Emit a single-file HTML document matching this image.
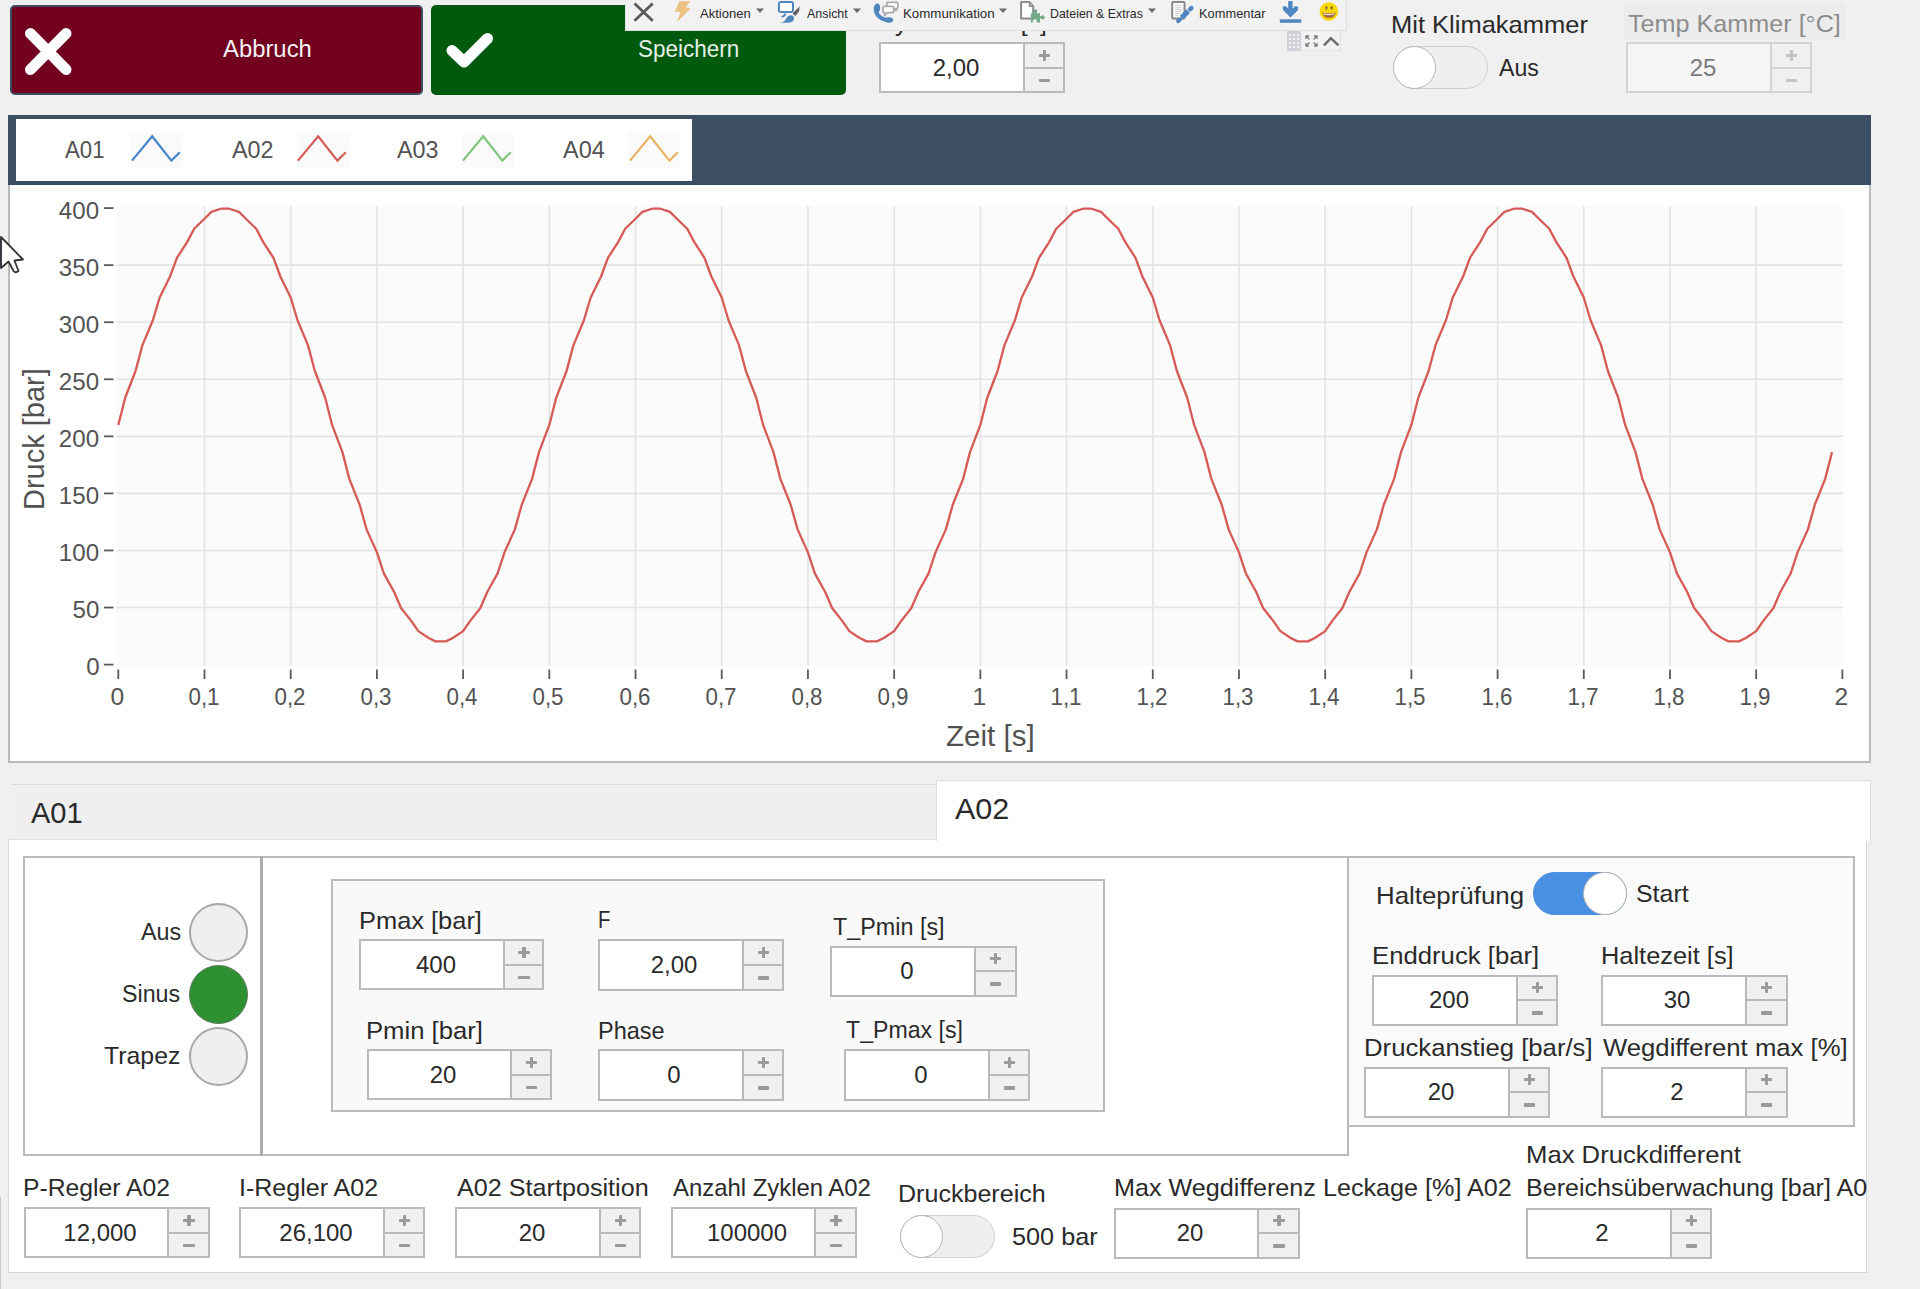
<!DOCTYPE html>
<html><head><meta charset="utf-8"><title>Editor</title>
<style>
html,body{margin:0;padding:0;}
body{width:1920px;height:1289px;overflow:hidden;position:relative;background:#f0f0f0;font-family:"Liberation Sans", sans-serif;}
</style></head><body>
<div style="position:absolute;left:10px;top:5px;width:413px;height:90px;box-sizing:border-box;background:#72001f;border:2px solid #3f4b5e;border-radius:5px;"></div>
<svg style="position:absolute;left:0;top:0" width="100" height="100"><path d="M30.5 33.5 L66 69.5 M66 33.5 L30.5 69.5" stroke="#fff" stroke-width="11" stroke-linecap="round" fill="none"/></svg>
<div style="position:absolute;left:223.10px;top:36.66px;font-size:24.6px;line-height:24.6px;height:24.6px;white-space:nowrap;color:#f2f2f2;transform-origin:left 0;transform:scaleX(0.9695);">Abbruch</div>
<div style="position:absolute;left:431px;top:5px;width:415px;height:90px;box-sizing:border-box;background:#005a0e;border-radius:5px;"></div>
<svg style="position:absolute;left:420px;top:0" width="100" height="100"><path d="M32 50.5 L44 62 L67.5 38.5" stroke="#fff" stroke-width="11" stroke-linecap="round" stroke-linejoin="round" fill="none"/></svg>
<div style="position:absolute;left:638.39px;top:36.56px;font-size:24.6px;line-height:24.6px;height:24.6px;white-space:nowrap;color:#e6efe6;transform-origin:left 0;transform:scaleX(0.9132);">Speichern</div>
<div style="position:absolute;left:880.00px;top:11.16px;font-size:24.6px;line-height:24.6px;height:24.6px;white-space:nowrap;color:#2a2a2a;transform-origin:left 0;transform:scaleX(1.0005);">Zyklusdauer [s]</div>
<div style="position:absolute;left:879px;top:42px;width:186px;height:51px;box-sizing:border-box;border:2px solid #b9babe;background:#ffffff;"></div>
<div style="position:absolute;left:1023px;top:42px;width:2px;height:51px;background:#b9babe;"></div>
<div style="position:absolute;left:1025px;top:44px;width:38px;height:47px;background:#f0f0f0;"></div>
<div style="position:absolute;left:1024px;top:66.5px;width:41px;height:2px;background:#b9babe;"></div>
<div style="position:absolute;left:1039.1px;top:53.5px;width:11.4px;height:3.4px;border-radius:0.8px;background:#9a9a9a;"></div>
<div style="position:absolute;left:1043.1px;top:49.5px;width:3.4px;height:11.4px;border-radius:0.8px;background:#9a9a9a;"></div>
<div style="position:absolute;left:1039.1px;top:78.5px;width:11.4px;height:3.6px;border-radius:0.8px;background:#9a9a9a;"></div>
<div style="position:absolute;left:455.79999999999995px;width:1000px;text-align:center;top:55.56px;font-size:24.6px;line-height:24.6px;height:24.6px;white-space:nowrap;color:#2a2a2a;transform-origin:center 0;transform:scaleX(0.975);">2,00</div>
<div style="position:absolute;left:625px;top:0px;width:722px;height:31px;box-sizing:border-box;background:#f2f2f2;border-bottom:1px solid #dedede;border-left:1px solid #e6e6e6;border-right:1px solid #e0e0e0;"></div>
<svg style="position:absolute;left:625px;top:0" width="40" height="31"><path d="M9.5 3.6 L27.7 20.8 M27.7 3.6 L9.5 20.8" stroke="#5a5a5a" stroke-width="2.8" fill="none"/></svg>
<svg style="position:absolute;left:665px;top:0" width="30" height="31"><path d="M14.4 1.3 L25.4 1.3 L20.5 7.2 L25.6 8.4 L11.9 22.3 L15.4 12.1 L9.8 11.6 Z" fill="#ecc282"/></svg>
<div style="position:absolute;left:700.10px;top:6.64px;font-size:13px;line-height:13px;height:13px;white-space:nowrap;color:#2a2a2a;transform-origin:left 0;transform:scaleX(1.0028);">Aktionen</div>
<svg style="position:absolute;left:756px;top:8px" width="10" height="6"><path d="M0 0.5 L8 0.5 L4 5 Z" fill="#6a6a6a"/></svg>
<svg style="position:absolute;left:772px;top:0" width="34" height="31"><rect x="6.9" y="2.1" width="14.1" height="10" rx="2" fill="#fff" stroke="#4f86c0" stroke-width="2"/><path d="M13.5 13.5 Q13 16.5 9.5 16.8" stroke="#4f86c0" stroke-width="1.6" fill="none"/><path d="M8 22.6 Q13 22 14.5 18 Q16 15 19 15.2 Q22.5 15.8 22 19 Q21 22.8 15 22.8 Z" fill="#4f86c0"/><path d="M20.5 13.5 L27.6 6.5 L27.2 11 L23.5 16 Z" fill="#5f5d5d"/></svg>
<div style="position:absolute;left:806.90px;top:6.64px;font-size:13px;line-height:13px;height:13px;white-space:nowrap;color:#2a2a2a;transform-origin:left 0;transform:scaleX(0.9554);">Ansicht</div>
<svg style="position:absolute;left:853px;top:8px" width="10" height="6"><path d="M0 0.5 L8 0.5 L4 5 Z" fill="#6a6a6a"/></svg>
<svg style="position:absolute;left:868px;top:0" width="34" height="31"><path d="M19.8 2.3 L28.8 2.3 Q29.8 2.3 29.8 3.3 L29.8 7.5 Q29.8 8.5 28.8 8.5 L27.5 8.5 L28.5 10.5 L25 8.5 L19.8 8.5 Q18.8 8.5 18.8 7.5 L18.8 3.3 Q18.8 2.3 19.8 2.3 Z" fill="#fff" stroke="#a8a8aa" stroke-width="1.7" stroke-linejoin="round"/><path d="M16 6.4 L24.7 6.4 Q25.7 6.4 25.7 7.4 L25.7 11.6 Q25.7 12.6 24.7 12.6 L19.5 12.6 L16.5 15.7 L16.5 12.6 L16 12.6 Q15 12.6 15 11.6 L15 7.4 Q15 6.4 16 6.4 Z" fill="#fff" stroke="#a8a8aa" stroke-width="1.7" stroke-linejoin="round"/><path d="M9 5.8 Q7.5 6.5 7.8 10 Q8.5 15.5 14 18.5 Q17.5 20.3 21.5 20.2" stroke="#4f86c0" stroke-width="4.2" stroke-linecap="round" fill="none"/><ellipse cx="9.3" cy="8" rx="2.8" ry="4.2" fill="#4f86c0"/><ellipse cx="21" cy="20" rx="4.2" ry="2.8" fill="#4f86c0"/></svg>
<div style="position:absolute;left:902.98px;top:6.64px;font-size:13px;line-height:13px;height:13px;white-space:nowrap;color:#2a2a2a;transform-origin:left 0;transform:scaleX(1.0230);">Kommunikation</div>
<svg style="position:absolute;left:998.5px;top:8px" width="10" height="6"><path d="M0 0.5 L8 0.5 L4 5 Z" fill="#6a6a6a"/></svg>
<svg style="position:absolute;left:1014px;top:0" width="34" height="31"><path d="M7.1 2.1 L15.5 2.1 L19.2 6.2 L19.2 18.6 L7.1 18.6 Z" fill="#fff" stroke="#8c8a8a" stroke-width="2" stroke-linejoin="round"/><path d="M15.5 2.1 L15.5 6.2 L19.2 6.2" fill="#b8b8b8" stroke="#8c8a8a" stroke-width="1.5"/><path d="M16.8 13.2 L20.3 13.2 L20.3 12.5 A1.8 1.8 0 1 1 22.5 12.5 L22.5 13.2 L26 13.2 L26 16.2 L27.3 16.2 A1.9 1.9 0 1 1 27.3 18.6 L26 18.6 L26 22.6 L22.6 22.6 L22.6 19.6 L18.9 19.6 L18.9 22.6 L16.8 22.6 Z" fill="#72aa88"/></svg>
<div style="position:absolute;left:1049.65px;top:6.64px;font-size:13px;line-height:13px;height:13px;white-space:nowrap;color:#2a2a2a;transform-origin:left 0;transform:scaleX(0.9521);">Dateien &amp; Extras</div>
<svg style="position:absolute;left:1147.5px;top:8px" width="10" height="6"><path d="M0 0.5 L8 0.5 L4 5 Z" fill="#6a6a6a"/></svg>
<svg style="position:absolute;left:1164px;top:0" width="34" height="31"><rect x="8.2" y="2.1" width="12.3" height="16.5" rx="1" fill="#fff" stroke="#8a8888" stroke-width="2"/><path d="M11.1 5.2 L17.8 5.2 M11.1 7.3 L17.8 7.3 M11.1 9.4 L17.8 9.4 M11.1 11.5 L17.8 11.5 M11.1 13.6 L16.2 13.6 M11.1 15.6 L14.2 15.6" stroke="#d2d2d6" stroke-width="1.1"/><path d="M14.2 21 L15.8 19.4" stroke="#4f86c0" stroke-width="4.2" stroke-linecap="round"/><path d="M17.6 17.6 L24.2 11.2" stroke="#4f86c0" stroke-width="5.2" stroke-linecap="butt"/><path d="M26.2 9.2 L27.4 8.1" stroke="#4f86c0" stroke-width="4.4" stroke-linecap="round"/></svg>
<div style="position:absolute;left:1198.61px;top:6.64px;font-size:13px;line-height:13px;height:13px;white-space:nowrap;color:#2a2a2a;transform-origin:left 0;transform:scaleX(0.9886);">Kommentar</div>
<svg style="position:absolute;left:1274px;top:0" width="34" height="31"><rect x="14.2" y="1.1" width="4.4" height="11" fill="#4f86c0"/><path d="M8.7 6.4 L12 6.2 L16.4 10.8 L20.8 6.2 L24.1 6.4 L24 10 L16.5 17.6 L9 10 Z" fill="#4f86c0"/><rect x="5.8" y="19.3" width="21.5" height="3.5" fill="#4f86c0"/></svg>
<svg style="position:absolute;left:1318px;top:0" width="24" height="31"><circle cx="10.9" cy="11.5" r="9.3" fill="#f8d800"/><ellipse cx="8.5" cy="7.8" rx="1" ry="1.9" fill="#7a5a28"/><ellipse cx="13.6" cy="7.8" rx="1" ry="1.9" fill="#7a5a28"/><path d="M4.2 12.4 Q10.9 13.4 17.8 12.4 Q16.5 18 10.9 18 Q5.4 18 4.2 12.4 Z" fill="#a86a38"/><path d="M5.3 13.2 Q10.9 14.2 16.7 13.2 L16.2 14.8 Q10.9 15.6 5.8 14.8 Z" fill="#e8e0d8"/></svg>
<div style="position:absolute;left:1287px;top:31px;width:54px;height:20px;box-sizing:border-box;background:#f2f2f2;border:1px solid #e2e2e2;border-top:none;"></div>
<div style="position:absolute;left:1287px;top:31px;width:14px;height:20px;background:#cfd3d9;"></div>
<svg style="position:absolute;left:1287px;top:31px" width="54" height="20"><g fill="#f4f4f4"><rect x="2" y="3" width="2" height="2"/><rect x="6" y="3" width="2" height="2"/><rect x="10" y="3" width="2" height="2"/><rect x="2" y="7" width="2" height="2"/><rect x="6" y="7" width="2" height="2"/><rect x="10" y="7" width="2" height="2"/><rect x="2" y="11" width="2" height="2"/><rect x="6" y="11" width="2" height="2"/><rect x="10" y="11" width="2" height="2"/><rect x="2" y="15" width="2" height="2"/><rect x="6" y="15" width="2" height="2"/><rect x="10" y="15" width="2" height="2"/></g><path d="M19 8 L19 5 L22 5 M19 5 L22.5 8.5 M30 8 L30 5 L27 5 M30 5 L26.5 8.5 M19 12 L19 15 L22 15 M19 15 L22.5 11.5 M30 12 L30 15 L27 15 M30 15 L26.5 11.5" stroke="#7a7a7a" stroke-width="1.3" fill="none"/><path d="M37 14.3 L43.8 7.2 L51.5 14.3" stroke="#6a6a6a" stroke-width="2.4" fill="none"/></svg>
<div style="position:absolute;left:1391.13px;top:13.26px;font-size:24.6px;line-height:24.6px;height:24.6px;white-space:nowrap;color:#2a2a2a;transform-origin:left 0;transform:scaleX(1.0371);">Mit Klimakammer</div>
<div style="position:absolute;left:1393px;top:46px;width:95px;height:43px;box-sizing:border-box;border-radius:21.5px;background:#efefef;border:1.5px solid #cfcfcf;"></div>
<div style="position:absolute;left:1393px;top:46px;width:43px;height:43px;box-sizing:border-box;border-radius:50%;background:#fff;border:1.5px solid #b4b4b4;"></div>
<div style="position:absolute;left:1499.10px;top:55.66px;font-size:24.6px;line-height:24.6px;height:24.6px;white-space:nowrap;color:#2a2a2a;transform-origin:left 0;transform:scaleX(0.9387);">Aus</div>
<div style="position:absolute;left:1624px;top:3px;width:222px;height:37px;background:#ececec;"></div>
<div style="position:absolute;left:1628.00px;top:12.06px;font-size:24.6px;line-height:24.6px;height:24.6px;white-space:nowrap;color:#8c8c8c;transform-origin:left 0;transform:scaleX(1.0234);">Temp Kammer [°C]</div>
<div style="position:absolute;left:1626px;top:42px;width:186px;height:51px;box-sizing:border-box;border:2px solid #d2d3d6;background:#f5f5f5;"></div>
<div style="position:absolute;left:1770px;top:42px;width:2px;height:51px;background:#d2d3d6;"></div>
<div style="position:absolute;left:1772px;top:44px;width:38px;height:47px;background:#f0f0f0;"></div>
<div style="position:absolute;left:1771px;top:66.5px;width:41px;height:2px;background:#d2d3d6;"></div>
<div style="position:absolute;left:1786.1px;top:53.5px;width:11.4px;height:3.4px;border-radius:0.8px;background:#c4c4c4;"></div>
<div style="position:absolute;left:1790.1px;top:49.5px;width:3.4px;height:11.4px;border-radius:0.8px;background:#c4c4c4;"></div>
<div style="position:absolute;left:1786.1px;top:78.5px;width:11.4px;height:3.6px;border-radius:0.8px;background:#c4c4c4;"></div>
<div style="position:absolute;left:1202.8px;width:1000px;text-align:center;top:55.56px;font-size:24.6px;line-height:24.6px;height:24.6px;white-space:nowrap;color:#7a7a7a;transform-origin:center 0;transform:scaleX(0.975);">25</div>
<div style="position:absolute;left:8px;top:115px;width:1863px;height:648px;box-sizing:border-box;background:#fff;border:2px solid #b9babe;"></div>
<div style="position:absolute;left:8px;top:115px;width:1863px;height:70px;background:#3c4e63;"></div>
<div style="position:absolute;left:16px;top:119px;width:676px;height:62px;background:#fff;"></div>
<div style="position:absolute;left:65.10px;top:138.43px;font-size:24.4px;line-height:24.4px;height:24.4px;white-space:nowrap;color:#525252;transform-origin:left 0;transform:scaleX(0.9128);">A01</div>
<div style="position:absolute;left:130.5px;top:132.5px;width:52px;height:36px;background:#fafafa;"></div>
<svg style="position:absolute;left:130px;top:130px" width="56" height="40"><path d="M2 30.6 L22.2 6.2 L41.4 30.6 L49.8 22.2" stroke="#4584c8" stroke-width="2.2" fill="none"/></svg>
<div style="position:absolute;left:231.70px;top:138.43px;font-size:24.4px;line-height:24.4px;height:24.4px;white-space:nowrap;color:#525252;transform-origin:left 0;transform:scaleX(0.9572);">A02</div>
<div style="position:absolute;left:296.8px;top:132.5px;width:52px;height:36px;background:#fafafa;"></div>
<svg style="position:absolute;left:296.3px;top:130px" width="56" height="40"><path d="M2 30.6 L22.2 6.2 L41.4 30.6 L49.8 22.2" stroke="#d65a55" stroke-width="2.2" fill="none"/></svg>
<div style="position:absolute;left:396.70px;top:138.43px;font-size:24.4px;line-height:24.4px;height:24.4px;white-space:nowrap;color:#525252;transform-origin:left 0;transform:scaleX(0.9572);">A03</div>
<div style="position:absolute;left:461.8px;top:132.5px;width:52px;height:36px;background:#fafafa;"></div>
<svg style="position:absolute;left:461.3px;top:130px" width="56" height="40"><path d="M2 30.6 L22.2 6.2 L41.4 30.6 L49.8 22.2" stroke="#80c47a" stroke-width="2.2" fill="none"/></svg>
<div style="position:absolute;left:562.50px;top:138.43px;font-size:24.4px;line-height:24.4px;height:24.4px;white-space:nowrap;color:#525252;transform-origin:left 0;transform:scaleX(0.9619);">A04</div>
<div style="position:absolute;left:628.0px;top:132.5px;width:52px;height:36px;background:#fafafa;"></div>
<svg style="position:absolute;left:627.5px;top:130px" width="56" height="40"><path d="M2 30.6 L22.2 6.2 L41.4 30.6 L49.8 22.2" stroke="#e9b264" stroke-width="2.2" fill="none"/></svg>
<svg style="position:absolute;left:0;top:0" width="1920" height="780">
<rect x="116.5" y="206" width="1726.5" height="460" fill="#fbfbfb"/>
<line x1="204.50" y1="206" x2="204.50" y2="666" stroke="#e4e4e4" stroke-width="1.6"/>
<line x1="290.71" y1="206" x2="290.71" y2="666" stroke="#e4e4e4" stroke-width="1.6"/>
<line x1="376.91" y1="206" x2="376.91" y2="666" stroke="#e4e4e4" stroke-width="1.6"/>
<line x1="463.12" y1="206" x2="463.12" y2="666" stroke="#e4e4e4" stroke-width="1.6"/>
<line x1="549.32" y1="206" x2="549.32" y2="666" stroke="#e4e4e4" stroke-width="1.6"/>
<line x1="635.53" y1="206" x2="635.53" y2="666" stroke="#e4e4e4" stroke-width="1.6"/>
<line x1="721.73" y1="206" x2="721.73" y2="666" stroke="#e4e4e4" stroke-width="1.6"/>
<line x1="807.94" y1="206" x2="807.94" y2="666" stroke="#e4e4e4" stroke-width="1.6"/>
<line x1="894.14" y1="206" x2="894.14" y2="666" stroke="#e4e4e4" stroke-width="1.6"/>
<line x1="980.35" y1="206" x2="980.35" y2="666" stroke="#e4e4e4" stroke-width="1.6"/>
<line x1="1066.55" y1="206" x2="1066.55" y2="666" stroke="#e4e4e4" stroke-width="1.6"/>
<line x1="1152.76" y1="206" x2="1152.76" y2="666" stroke="#e4e4e4" stroke-width="1.6"/>
<line x1="1238.96" y1="206" x2="1238.96" y2="666" stroke="#e4e4e4" stroke-width="1.6"/>
<line x1="1325.17" y1="206" x2="1325.17" y2="666" stroke="#e4e4e4" stroke-width="1.6"/>
<line x1="1411.38" y1="206" x2="1411.38" y2="666" stroke="#e4e4e4" stroke-width="1.6"/>
<line x1="1497.58" y1="206" x2="1497.58" y2="666" stroke="#e4e4e4" stroke-width="1.6"/>
<line x1="1583.78" y1="206" x2="1583.78" y2="666" stroke="#e4e4e4" stroke-width="1.6"/>
<line x1="1669.99" y1="206" x2="1669.99" y2="666" stroke="#e4e4e4" stroke-width="1.6"/>
<line x1="1756.19" y1="206" x2="1756.19" y2="666" stroke="#e4e4e4" stroke-width="1.6"/>
<line x1="116.5" y1="607.54" x2="1843" y2="607.54" stroke="#e4e4e4" stroke-width="1.6"/>
<line x1="116.5" y1="550.48" x2="1843" y2="550.48" stroke="#e4e4e4" stroke-width="1.6"/>
<line x1="116.5" y1="493.41" x2="1843" y2="493.41" stroke="#e4e4e4" stroke-width="1.6"/>
<line x1="116.5" y1="436.35" x2="1843" y2="436.35" stroke="#e4e4e4" stroke-width="1.6"/>
<line x1="116.5" y1="379.29" x2="1843" y2="379.29" stroke="#e4e4e4" stroke-width="1.6"/>
<line x1="116.5" y1="322.22" x2="1843" y2="322.22" stroke="#e4e4e4" stroke-width="1.6"/>
<line x1="116.5" y1="265.16" x2="1843" y2="265.16" stroke="#e4e4e4" stroke-width="1.6"/>
<line x1="104" y1="664.60" x2="113.5" y2="664.60" stroke="#5a5a5a" stroke-width="1.8"/>
<line x1="104" y1="607.54" x2="113.5" y2="607.54" stroke="#5a5a5a" stroke-width="1.8"/>
<line x1="104" y1="550.48" x2="113.5" y2="550.48" stroke="#5a5a5a" stroke-width="1.8"/>
<line x1="104" y1="493.41" x2="113.5" y2="493.41" stroke="#5a5a5a" stroke-width="1.8"/>
<line x1="104" y1="436.35" x2="113.5" y2="436.35" stroke="#5a5a5a" stroke-width="1.8"/>
<line x1="104" y1="379.29" x2="113.5" y2="379.29" stroke="#5a5a5a" stroke-width="1.8"/>
<line x1="104" y1="322.22" x2="113.5" y2="322.22" stroke="#5a5a5a" stroke-width="1.8"/>
<line x1="104" y1="265.16" x2="113.5" y2="265.16" stroke="#5a5a5a" stroke-width="1.8"/>
<line x1="104" y1="208.10" x2="113.5" y2="208.10" stroke="#5a5a5a" stroke-width="1.8"/>
<line x1="118.30" y1="669.5" x2="118.30" y2="679" stroke="#5a5a5a" stroke-width="1.8"/>
<line x1="204.50" y1="669.5" x2="204.50" y2="679" stroke="#5a5a5a" stroke-width="1.8"/>
<line x1="290.71" y1="669.5" x2="290.71" y2="679" stroke="#5a5a5a" stroke-width="1.8"/>
<line x1="376.91" y1="669.5" x2="376.91" y2="679" stroke="#5a5a5a" stroke-width="1.8"/>
<line x1="463.12" y1="669.5" x2="463.12" y2="679" stroke="#5a5a5a" stroke-width="1.8"/>
<line x1="549.32" y1="669.5" x2="549.32" y2="679" stroke="#5a5a5a" stroke-width="1.8"/>
<line x1="635.53" y1="669.5" x2="635.53" y2="679" stroke="#5a5a5a" stroke-width="1.8"/>
<line x1="721.73" y1="669.5" x2="721.73" y2="679" stroke="#5a5a5a" stroke-width="1.8"/>
<line x1="807.94" y1="669.5" x2="807.94" y2="679" stroke="#5a5a5a" stroke-width="1.8"/>
<line x1="894.14" y1="669.5" x2="894.14" y2="679" stroke="#5a5a5a" stroke-width="1.8"/>
<line x1="980.35" y1="669.5" x2="980.35" y2="679" stroke="#5a5a5a" stroke-width="1.8"/>
<line x1="1066.55" y1="669.5" x2="1066.55" y2="679" stroke="#5a5a5a" stroke-width="1.8"/>
<line x1="1152.76" y1="669.5" x2="1152.76" y2="679" stroke="#5a5a5a" stroke-width="1.8"/>
<line x1="1238.96" y1="669.5" x2="1238.96" y2="679" stroke="#5a5a5a" stroke-width="1.8"/>
<line x1="1325.17" y1="669.5" x2="1325.17" y2="679" stroke="#5a5a5a" stroke-width="1.8"/>
<line x1="1411.38" y1="669.5" x2="1411.38" y2="679" stroke="#5a5a5a" stroke-width="1.8"/>
<line x1="1497.58" y1="669.5" x2="1497.58" y2="679" stroke="#5a5a5a" stroke-width="1.8"/>
<line x1="1583.78" y1="669.5" x2="1583.78" y2="679" stroke="#5a5a5a" stroke-width="1.8"/>
<line x1="1669.99" y1="669.5" x2="1669.99" y2="679" stroke="#5a5a5a" stroke-width="1.8"/>
<line x1="1756.19" y1="669.5" x2="1756.19" y2="679" stroke="#5a5a5a" stroke-width="1.8"/>
<line x1="1842.40" y1="669.5" x2="1842.40" y2="679" stroke="#5a5a5a" stroke-width="1.8"/>
<polyline points="118.30,424.94 125.20,397.76 135.54,371.01 142.44,345.11 152.78,320.48 159.68,297.48 170.02,276.50 176.92,257.86 187.26,241.86 194.16,228.74 204.50,218.71 211.40,211.94 221.75,208.53 228.64,208.53 238.99,211.94 245.88,218.71 256.23,228.74 263.12,241.86 273.47,257.86 280.37,276.50 290.71,297.48 297.61,320.48 307.95,345.11 314.85,371.01 325.19,397.76 332.09,424.94 342.43,452.11 349.33,478.86 359.67,504.76 366.57,529.40 376.91,552.39 383.81,573.37 394.16,592.01 401.05,608.02 411.40,621.14 418.29,631.16 428.64,637.93 435.53,641.35 445.88,641.35 452.78,637.93 463.12,631.16 470.02,621.14 480.36,608.02 487.26,592.01 497.60,573.37 504.50,552.39 514.84,529.40 521.74,504.76 532.08,478.86 538.98,452.11 549.32,424.94 556.22,397.76 566.57,371.01 573.46,345.11 583.81,320.48 590.70,297.48 601.05,276.50 607.94,257.86 618.29,241.86 625.19,228.74 635.53,218.71 642.43,211.94 652.77,208.53 659.67,208.53 670.01,211.94 676.91,218.71 687.25,228.74 694.15,241.86 704.49,257.86 711.39,276.50 721.73,297.48 728.63,320.48 738.98,345.11 745.87,371.01 756.22,397.76 763.11,424.94 773.46,452.11 780.35,478.86 790.70,504.76 797.60,529.40 807.94,552.39 814.84,573.37 825.18,592.01 832.08,608.02 842.42,621.14 849.32,631.16 859.66,637.93 866.56,641.35 876.90,641.35 883.80,637.93 894.14,631.16 901.04,621.14 911.39,608.02 918.28,592.01 928.63,573.37 935.52,552.39 945.87,529.40 952.76,504.76 963.11,478.86 970.01,452.11 980.35,424.94 987.25,397.76 997.59,371.01 1004.49,345.11 1014.83,320.48 1021.73,297.48 1032.07,276.50 1038.97,257.86 1049.31,241.86 1056.21,228.74 1066.56,218.71 1073.45,211.94 1083.80,208.53 1090.69,208.53 1101.04,211.94 1107.93,218.71 1118.28,228.74 1125.17,241.86 1135.52,257.86 1142.42,276.50 1152.76,297.48 1159.66,320.48 1170.00,345.11 1176.90,371.01 1187.24,397.76 1194.14,424.94 1204.48,452.11 1211.38,478.86 1221.72,504.76 1228.62,529.40 1238.96,552.39 1245.86,573.37 1256.21,592.01 1263.10,608.02 1273.45,621.14 1280.34,631.16 1290.69,637.93 1297.58,641.35 1307.93,641.35 1314.83,637.93 1325.17,631.16 1332.07,621.14 1342.41,608.02 1349.31,592.01 1359.65,573.37 1366.55,552.39 1376.89,529.40 1383.79,504.76 1394.13,478.86 1401.03,452.11 1411.37,424.94 1418.27,397.76 1428.62,371.01 1435.51,345.11 1445.86,320.48 1452.75,297.48 1463.10,276.50 1469.99,257.86 1480.34,241.86 1487.24,228.74 1497.58,218.71 1504.48,211.94 1514.82,208.53 1521.72,208.53 1532.06,211.94 1538.96,218.71 1549.30,228.74 1556.20,241.86 1566.54,257.86 1573.44,276.50 1583.78,297.48 1590.68,320.48 1601.03,345.11 1607.92,371.01 1618.27,397.76 1625.16,424.94 1635.51,452.11 1642.40,478.86 1652.75,504.76 1659.65,529.40 1669.99,552.39 1676.89,573.37 1687.23,592.01 1694.13,608.02 1704.47,621.14 1711.37,631.16 1721.71,637.93 1728.61,641.35 1738.95,641.35 1745.85,637.93 1756.19,631.16 1763.09,621.14 1773.44,608.02 1780.33,592.01 1790.68,573.37 1797.57,552.39 1807.92,529.40 1814.81,504.76 1825.16,478.86 1832.06,452.11" fill="none" stroke="#d65a55" stroke-width="2.3" stroke-linejoin="round"/>
</svg>
<div style="position:absolute;right:1820.5px;top:655.26px;font-size:24.6px;line-height:24.6px;height:24.6px;white-space:nowrap;color:#535353;transform-origin:right 0;transform:scaleX(0.98);">0</div>
<div style="position:absolute;right:1820.5px;top:598.20px;font-size:24.6px;line-height:24.6px;height:24.6px;white-space:nowrap;color:#535353;transform-origin:right 0;transform:scaleX(0.98);">50</div>
<div style="position:absolute;right:1820.5px;top:541.13px;font-size:24.6px;line-height:24.6px;height:24.6px;white-space:nowrap;color:#535353;transform-origin:right 0;transform:scaleX(0.98);">100</div>
<div style="position:absolute;right:1820.5px;top:484.07px;font-size:24.6px;line-height:24.6px;height:24.6px;white-space:nowrap;color:#535353;transform-origin:right 0;transform:scaleX(0.98);">150</div>
<div style="position:absolute;right:1820.5px;top:427.01px;font-size:24.6px;line-height:24.6px;height:24.6px;white-space:nowrap;color:#535353;transform-origin:right 0;transform:scaleX(0.98);">200</div>
<div style="position:absolute;right:1820.5px;top:369.95px;font-size:24.6px;line-height:24.6px;height:24.6px;white-space:nowrap;color:#535353;transform-origin:right 0;transform:scaleX(0.98);">250</div>
<div style="position:absolute;right:1820.5px;top:312.88px;font-size:24.6px;line-height:24.6px;height:24.6px;white-space:nowrap;color:#535353;transform-origin:right 0;transform:scaleX(0.98);">300</div>
<div style="position:absolute;right:1820.5px;top:255.82px;font-size:24.6px;line-height:24.6px;height:24.6px;white-space:nowrap;color:#535353;transform-origin:right 0;transform:scaleX(0.98);">350</div>
<div style="position:absolute;right:1820.5px;top:198.76px;font-size:24.6px;line-height:24.6px;height:24.6px;white-space:nowrap;color:#535353;transform-origin:right 0;transform:scaleX(0.98);">400</div>
<div style="position:absolute;left:-382.7px;width:1000px;text-align:center;top:685.46px;font-size:24.6px;line-height:24.6px;height:24.6px;white-space:nowrap;color:#535353;transform-origin:center 0;">0</div>
<div style="position:absolute;left:-296.495px;width:1000px;text-align:center;top:685.46px;font-size:24.6px;line-height:24.6px;height:24.6px;white-space:nowrap;color:#535353;transform-origin:center 0;transform:scaleX(0.91);">0,1</div>
<div style="position:absolute;left:-210.29000000000002px;width:1000px;text-align:center;top:685.46px;font-size:24.6px;line-height:24.6px;height:24.6px;white-space:nowrap;color:#535353;transform-origin:center 0;transform:scaleX(0.91);">0,2</div>
<div style="position:absolute;left:-124.08500000000004px;width:1000px;text-align:center;top:685.46px;font-size:24.6px;line-height:24.6px;height:24.6px;white-space:nowrap;color:#535353;transform-origin:center 0;transform:scaleX(0.91);">0,3</div>
<div style="position:absolute;left:-37.879999999999995px;width:1000px;text-align:center;top:685.46px;font-size:24.6px;line-height:24.6px;height:24.6px;white-space:nowrap;color:#535353;transform-origin:center 0;transform:scaleX(0.91);">0,4</div>
<div style="position:absolute;left:48.32499999999993px;width:1000px;text-align:center;top:685.46px;font-size:24.6px;line-height:24.6px;height:24.6px;white-space:nowrap;color:#535353;transform-origin:center 0;transform:scaleX(0.91);">0,5</div>
<div style="position:absolute;left:134.52999999999986px;width:1000px;text-align:center;top:685.46px;font-size:24.6px;line-height:24.6px;height:24.6px;white-space:nowrap;color:#535353;transform-origin:center 0;transform:scaleX(0.91);">0,6</div>
<div style="position:absolute;left:220.7349999999999px;width:1000px;text-align:center;top:685.46px;font-size:24.6px;line-height:24.6px;height:24.6px;white-space:nowrap;color:#535353;transform-origin:center 0;transform:scaleX(0.91);">0,7</div>
<div style="position:absolute;left:306.93999999999994px;width:1000px;text-align:center;top:685.46px;font-size:24.6px;line-height:24.6px;height:24.6px;white-space:nowrap;color:#535353;transform-origin:center 0;transform:scaleX(0.91);">0,8</div>
<div style="position:absolute;left:393.145px;width:1000px;text-align:center;top:685.46px;font-size:24.6px;line-height:24.6px;height:24.6px;white-space:nowrap;color:#535353;transform-origin:center 0;transform:scaleX(0.91);">0,9</div>
<div style="position:absolute;left:479.3499999999999px;width:1000px;text-align:center;top:685.46px;font-size:24.6px;line-height:24.6px;height:24.6px;white-space:nowrap;color:#535353;transform-origin:center 0;">1</div>
<div style="position:absolute;left:565.5549999999998px;width:1000px;text-align:center;top:685.46px;font-size:24.6px;line-height:24.6px;height:24.6px;white-space:nowrap;color:#535353;transform-origin:center 0;transform:scaleX(0.91);">1,1</div>
<div style="position:absolute;left:651.7599999999998px;width:1000px;text-align:center;top:685.46px;font-size:24.6px;line-height:24.6px;height:24.6px;white-space:nowrap;color:#535353;transform-origin:center 0;transform:scaleX(0.91);">1,2</div>
<div style="position:absolute;left:737.9649999999999px;width:1000px;text-align:center;top:685.46px;font-size:24.6px;line-height:24.6px;height:24.6px;white-space:nowrap;color:#535353;transform-origin:center 0;transform:scaleX(0.91);">1,3</div>
<div style="position:absolute;left:824.1699999999998px;width:1000px;text-align:center;top:685.46px;font-size:24.6px;line-height:24.6px;height:24.6px;white-space:nowrap;color:#535353;transform-origin:center 0;transform:scaleX(0.91);">1,4</div>
<div style="position:absolute;left:910.375px;width:1000px;text-align:center;top:685.46px;font-size:24.6px;line-height:24.6px;height:24.6px;white-space:nowrap;color:#535353;transform-origin:center 0;transform:scaleX(0.91);">1,5</div>
<div style="position:absolute;left:996.5799999999999px;width:1000px;text-align:center;top:685.46px;font-size:24.6px;line-height:24.6px;height:24.6px;white-space:nowrap;color:#535353;transform-origin:center 0;transform:scaleX(0.91);">1,6</div>
<div style="position:absolute;left:1082.7849999999999px;width:1000px;text-align:center;top:685.46px;font-size:24.6px;line-height:24.6px;height:24.6px;white-space:nowrap;color:#535353;transform-origin:center 0;transform:scaleX(0.91);">1,7</div>
<div style="position:absolute;left:1168.99px;width:1000px;text-align:center;top:685.46px;font-size:24.6px;line-height:24.6px;height:24.6px;white-space:nowrap;color:#535353;transform-origin:center 0;transform:scaleX(0.91);">1,8</div>
<div style="position:absolute;left:1255.195px;width:1000px;text-align:center;top:685.46px;font-size:24.6px;line-height:24.6px;height:24.6px;white-space:nowrap;color:#535353;transform-origin:center 0;transform:scaleX(0.91);">1,9</div>
<div style="position:absolute;left:1341.3999999999999px;width:1000px;text-align:center;top:685.46px;font-size:24.6px;line-height:24.6px;height:24.6px;white-space:nowrap;color:#535353;transform-origin:center 0;">2</div>
<div style="position:absolute;left:44.1px;top:507.5px;width:0;height:0;transform:rotate(-90deg);transform-origin:0 0;"><div style="position:absolute;left:-2px;top:-24.21px;font-size:29px;line-height:29px;color:#525252;white-space:nowrap;">Druck [bar]</div></div>
<div style="position:absolute;left:945.90px;top:721.68px;font-size:29px;line-height:29px;height:29px;white-space:nowrap;color:#525252;transform-origin:left 0;transform:scaleX(1.0182);">Zeit [s]</div>
<div style="position:absolute;left:11px;top:784px;width:926px;height:55px;background:#efefef;border-top:1px solid #dadada;"></div>
<div style="position:absolute;left:31.00px;top:798.45px;font-size:30px;line-height:30px;height:30px;white-space:nowrap;color:#2a2a2a;transform-origin:left 0;transform:scaleX(0.9678);">A01</div>
<div style="position:absolute;left:8px;top:839px;width:1859px;height:434px;box-sizing:border-box;background:#fff;border:1px solid #d6d6d8;border-top:1px solid #e0e0e0;"></div>
<div style="position:absolute;left:936px;top:780px;width:935px;height:61px;box-sizing:border-box;background:#fff;border:1px solid #dcdcdc;border-bottom:none;"></div>
<div style="position:absolute;left:955.00px;top:794.35px;font-size:30px;line-height:30px;height:30px;white-space:nowrap;color:#2a2a2a;transform-origin:left 0;transform:scaleX(1.0172);">A02</div>
<div style="position:absolute;left:23px;top:856px;width:1326px;height:300px;box-sizing:border-box;border:2px solid #b9babe;"></div>
<div style="position:absolute;left:260px;top:856px;width:3px;height:300px;background:#a9abb0;"></div>
<div style="position:absolute;left:140.50px;top:920.46px;font-size:24.6px;line-height:24.6px;height:24.6px;white-space:nowrap;color:#2a2a2a;transform-origin:left 0;transform:scaleX(0.9458);">Aus</div>
<div style="position:absolute;left:189.3px;top:902.7px;width:59px;height:59px;box-sizing:border-box;border-radius:50%;background:#efefef;border:2px solid #a8a8a8;"></div>
<div style="position:absolute;left:122.46px;top:981.76px;font-size:24.6px;line-height:24.6px;height:24.6px;white-space:nowrap;color:#2a2a2a;transform-origin:left 0;transform:scaleX(0.9448);">Sinus</div>
<div style="position:absolute;left:189.3px;top:964.8px;width:59px;height:59px;box-sizing:border-box;border-radius:50%;background:#2e9030;border:1.5px solid #5b7a5b;"></div>
<div style="position:absolute;left:104.20px;top:1043.76px;font-size:24.6px;line-height:24.6px;height:24.6px;white-space:nowrap;color:#2a2a2a;transform-origin:left 0;transform:scaleX(1.0102);">Trapez</div>
<div style="position:absolute;left:189.3px;top:1026.8px;width:59px;height:59px;box-sizing:border-box;border-radius:50%;background:#efefef;border:2px solid #a8a8a8;"></div>
<div style="position:absolute;left:331px;top:879px;width:774px;height:233px;box-sizing:border-box;background:#f9f9f9;border:2px solid #b9babe;"></div>
<div style="position:absolute;left:358.93px;top:909.46px;font-size:24.6px;line-height:24.6px;height:24.6px;white-space:nowrap;color:#2a2a2a;transform-origin:left 0;transform:scaleX(1.0338);">Pmax [bar]</div>
<div style="position:absolute;left:359px;top:939px;width:185px;height:51px;box-sizing:border-box;border:2px solid #b9babe;background:#ffffff;"></div>
<div style="position:absolute;left:502.5px;top:939px;width:2px;height:51px;background:#b9babe;"></div>
<div style="position:absolute;left:504.5px;top:941px;width:37.5px;height:47px;background:#f0f0f0;"></div>
<div style="position:absolute;left:503.5px;top:963.5px;width:40.5px;height:2px;background:#b9babe;"></div>
<div style="position:absolute;left:518.3px;top:950.5px;width:11.4px;height:3.4px;border-radius:0.8px;background:#9a9a9a;"></div>
<div style="position:absolute;left:522.3px;top:946.5px;width:3.4px;height:11.4px;border-radius:0.8px;background:#9a9a9a;"></div>
<div style="position:absolute;left:518.3px;top:975.5px;width:11.4px;height:3.6px;border-radius:0.8px;background:#9a9a9a;"></div>
<div style="position:absolute;left:-64.44999999999999px;width:1000px;text-align:center;top:952.56px;font-size:24.6px;line-height:24.6px;height:24.6px;white-space:nowrap;color:#2a2a2a;transform-origin:center 0;transform:scaleX(0.975);">400</div>
<div style="position:absolute;left:366.21px;top:1019.46px;font-size:24.6px;line-height:24.6px;height:24.6px;white-space:nowrap;color:#2a2a2a;transform-origin:left 0;transform:scaleX(1.0435);">Pmin [bar]</div>
<div style="position:absolute;left:366.5px;top:1049px;width:185px;height:51px;box-sizing:border-box;border:2px solid #b9babe;background:#ffffff;"></div>
<div style="position:absolute;left:510px;top:1049px;width:2px;height:51px;background:#b9babe;"></div>
<div style="position:absolute;left:512px;top:1051px;width:37.5px;height:47px;background:#f0f0f0;"></div>
<div style="position:absolute;left:511px;top:1073.5px;width:40.5px;height:2px;background:#b9babe;"></div>
<div style="position:absolute;left:525.8px;top:1060.5px;width:11.4px;height:3.4px;border-radius:0.8px;background:#9a9a9a;"></div>
<div style="position:absolute;left:529.8px;top:1056.5px;width:3.4px;height:11.4px;border-radius:0.8px;background:#9a9a9a;"></div>
<div style="position:absolute;left:525.8px;top:1085.5px;width:11.4px;height:3.6px;border-radius:0.8px;background:#9a9a9a;"></div>
<div style="position:absolute;left:-56.94999999999999px;width:1000px;text-align:center;top:1062.56px;font-size:24.6px;line-height:24.6px;height:24.6px;white-space:nowrap;color:#2a2a2a;transform-origin:center 0;transform:scaleX(0.975);">20</div>
<div style="position:absolute;left:598.35px;top:908.26px;font-size:24.6px;line-height:24.6px;height:24.6px;white-space:nowrap;color:#2a2a2a;transform-origin:left 0;transform:scaleX(0.8231);">F</div>
<div style="position:absolute;left:597.5px;top:939px;width:186px;height:52px;box-sizing:border-box;border:2px solid #b9babe;background:#ffffff;"></div>
<div style="position:absolute;left:741.5px;top:939px;width:2px;height:52px;background:#b9babe;"></div>
<div style="position:absolute;left:743.5px;top:941px;width:38.0px;height:48px;background:#f0f0f0;"></div>
<div style="position:absolute;left:742.5px;top:964.0px;width:41.0px;height:2px;background:#b9babe;"></div>
<div style="position:absolute;left:757.6px;top:950.8px;width:11.4px;height:3.4px;border-radius:0.8px;background:#9a9a9a;"></div>
<div style="position:absolute;left:761.6px;top:946.8px;width:3.4px;height:11.4px;border-radius:0.8px;background:#9a9a9a;"></div>
<div style="position:absolute;left:757.6px;top:976.2px;width:11.4px;height:3.6px;border-radius:0.8px;background:#9a9a9a;"></div>
<div style="position:absolute;left:174.29999999999995px;width:1000px;text-align:center;top:953.06px;font-size:24.6px;line-height:24.6px;height:24.6px;white-space:nowrap;color:#2a2a2a;transform-origin:center 0;transform:scaleX(0.975);">2,00</div>
<div style="position:absolute;left:598.09px;top:1018.66px;font-size:24.6px;line-height:24.6px;height:24.6px;white-space:nowrap;color:#2a2a2a;transform-origin:left 0;transform:scaleX(0.9544);">Phase</div>
<div style="position:absolute;left:597.5px;top:1049px;width:186px;height:52px;box-sizing:border-box;border:2px solid #b9babe;background:#ffffff;"></div>
<div style="position:absolute;left:741.5px;top:1049px;width:2px;height:52px;background:#b9babe;"></div>
<div style="position:absolute;left:743.5px;top:1051px;width:38.0px;height:48px;background:#f0f0f0;"></div>
<div style="position:absolute;left:742.5px;top:1074.0px;width:41.0px;height:2px;background:#b9babe;"></div>
<div style="position:absolute;left:757.6px;top:1060.8px;width:11.4px;height:3.4px;border-radius:0.8px;background:#9a9a9a;"></div>
<div style="position:absolute;left:761.6px;top:1056.8px;width:3.4px;height:11.4px;border-radius:0.8px;background:#9a9a9a;"></div>
<div style="position:absolute;left:757.6px;top:1086.2px;width:11.4px;height:3.6px;border-radius:0.8px;background:#9a9a9a;"></div>
<div style="position:absolute;left:174.29999999999995px;width:1000px;text-align:center;top:1063.06px;font-size:24.6px;line-height:24.6px;height:24.6px;white-space:nowrap;color:#2a2a2a;transform-origin:center 0;transform:scaleX(0.975);">0</div>
<div style="position:absolute;left:832.50px;top:915.46px;font-size:24.6px;line-height:24.6px;height:24.6px;white-space:nowrap;color:#2a2a2a;transform-origin:left 0;transform:scaleX(0.9495);">T_Pmin [s]</div>
<div style="position:absolute;left:830px;top:945.5px;width:186.5px;height:51px;box-sizing:border-box;border:2px solid #b9babe;background:#ffffff;"></div>
<div style="position:absolute;left:973.5px;top:945.5px;width:2px;height:51px;background:#b9babe;"></div>
<div style="position:absolute;left:975.5px;top:947.5px;width:39.0px;height:47px;background:#f0f0f0;"></div>
<div style="position:absolute;left:974.5px;top:970.0px;width:42.0px;height:2px;background:#b9babe;"></div>
<div style="position:absolute;left:990.1px;top:957.0px;width:11.4px;height:3.4px;border-radius:0.8px;background:#9a9a9a;"></div>
<div style="position:absolute;left:994.1px;top:953.0px;width:3.4px;height:11.4px;border-radius:0.8px;background:#9a9a9a;"></div>
<div style="position:absolute;left:990.1px;top:982.0px;width:11.4px;height:3.6px;border-radius:0.8px;background:#9a9a9a;"></div>
<div style="position:absolute;left:406.54999999999995px;width:1000px;text-align:center;top:959.06px;font-size:24.6px;line-height:24.6px;height:24.6px;white-space:nowrap;color:#2a2a2a;transform-origin:center 0;transform:scaleX(0.975);">0</div>
<div style="position:absolute;left:846.40px;top:1018.46px;font-size:24.6px;line-height:24.6px;height:24.6px;white-space:nowrap;color:#2a2a2a;transform-origin:left 0;transform:scaleX(0.9407);">T_Pmax [s]</div>
<div style="position:absolute;left:844px;top:1049px;width:186px;height:52px;box-sizing:border-box;border:2px solid #b9babe;background:#ffffff;"></div>
<div style="position:absolute;left:987.5px;top:1049px;width:2px;height:52px;background:#b9babe;"></div>
<div style="position:absolute;left:989.5px;top:1051px;width:38.5px;height:48px;background:#f0f0f0;"></div>
<div style="position:absolute;left:988.5px;top:1074.0px;width:41.5px;height:2px;background:#b9babe;"></div>
<div style="position:absolute;left:1003.8px;top:1060.8px;width:11.4px;height:3.4px;border-radius:0.8px;background:#9a9a9a;"></div>
<div style="position:absolute;left:1007.8px;top:1056.8px;width:3.4px;height:11.4px;border-radius:0.8px;background:#9a9a9a;"></div>
<div style="position:absolute;left:1003.8px;top:1086.2px;width:11.4px;height:3.6px;border-radius:0.8px;background:#9a9a9a;"></div>
<div style="position:absolute;left:420.54999999999995px;width:1000px;text-align:center;top:1063.06px;font-size:24.6px;line-height:24.6px;height:24.6px;white-space:nowrap;color:#2a2a2a;transform-origin:center 0;transform:scaleX(0.975);">0</div>
<div style="position:absolute;left:1346.5px;top:856px;width:508px;height:271px;box-sizing:border-box;background:#fafafa;border:2px solid #b9babe;"></div>
<div style="position:absolute;left:1375.70px;top:884.46px;font-size:24.6px;line-height:24.6px;height:24.6px;white-space:nowrap;color:#2a2a2a;transform-origin:left 0;transform:scaleX(1.0510);">Halteprüfung</div>
<div style="position:absolute;left:1532.5px;top:871.5px;width:94px;height:43.5px;box-sizing:border-box;border-radius:21.75px;background:#4a90e2;border:1.5px solid #4a90e2;"></div>
<div style="position:absolute;left:1583.0px;top:871.5px;width:43.5px;height:43.5px;box-sizing:border-box;border-radius:50%;background:#fff;border:1.5px solid #b4b4b4;"></div>
<div style="position:absolute;left:1635.99px;top:881.96px;font-size:24.6px;line-height:24.6px;height:24.6px;white-space:nowrap;color:#2a2a2a;transform-origin:left 0;transform:scaleX(1.0126);">Start</div>
<div style="position:absolute;left:1371.66px;top:943.86px;font-size:24.6px;line-height:24.6px;height:24.6px;white-space:nowrap;color:#2a2a2a;transform-origin:left 0;transform:scaleX(1.0454);">Enddruck [bar]</div>
<div style="position:absolute;left:1600.74px;top:943.86px;font-size:24.6px;line-height:24.6px;height:24.6px;white-space:nowrap;color:#2a2a2a;transform-origin:left 0;transform:scaleX(1.0323);">Haltezeit [s]</div>
<div style="position:absolute;left:1371.5px;top:974.5px;width:186px;height:51px;box-sizing:border-box;border:2px solid #b9babe;background:#ffffff;"></div>
<div style="position:absolute;left:1516px;top:974.5px;width:2px;height:51px;background:#b9babe;"></div>
<div style="position:absolute;left:1518px;top:976.5px;width:37.5px;height:47px;background:#f0f0f0;"></div>
<div style="position:absolute;left:1517px;top:999.0px;width:40.5px;height:2px;background:#b9babe;"></div>
<div style="position:absolute;left:1531.8px;top:986.0px;width:11.4px;height:3.4px;border-radius:0.8px;background:#9a9a9a;"></div>
<div style="position:absolute;left:1535.8px;top:982.0px;width:3.4px;height:11.4px;border-radius:0.8px;background:#9a9a9a;"></div>
<div style="position:absolute;left:1531.8px;top:1011.0px;width:11.4px;height:3.6px;border-radius:0.8px;background:#9a9a9a;"></div>
<div style="position:absolute;left:948.55px;width:1000px;text-align:center;top:988.06px;font-size:24.6px;line-height:24.6px;height:24.6px;white-space:nowrap;color:#2a2a2a;transform-origin:center 0;transform:scaleX(0.975);">200</div>
<div style="position:absolute;left:1600.5px;top:974.5px;width:187px;height:51px;box-sizing:border-box;border:2px solid #b9babe;background:#ffffff;"></div>
<div style="position:absolute;left:1744.5px;top:974.5px;width:2px;height:51px;background:#b9babe;"></div>
<div style="position:absolute;left:1746.5px;top:976.5px;width:39.0px;height:47px;background:#f0f0f0;"></div>
<div style="position:absolute;left:1745.5px;top:999.0px;width:42.0px;height:2px;background:#b9babe;"></div>
<div style="position:absolute;left:1761.1px;top:986.0px;width:11.4px;height:3.4px;border-radius:0.8px;background:#9a9a9a;"></div>
<div style="position:absolute;left:1765.1px;top:982.0px;width:3.4px;height:11.4px;border-radius:0.8px;background:#9a9a9a;"></div>
<div style="position:absolute;left:1761.1px;top:1011.0px;width:11.4px;height:3.6px;border-radius:0.8px;background:#9a9a9a;"></div>
<div style="position:absolute;left:1177.3px;width:1000px;text-align:center;top:988.06px;font-size:24.6px;line-height:24.6px;height:24.6px;white-space:nowrap;color:#2a2a2a;transform-origin:center 0;transform:scaleX(0.975);">30</div>
<div style="position:absolute;left:1364.16px;top:1035.71px;font-size:24.6px;line-height:24.6px;height:24.6px;white-space:nowrap;color:#2a2a2a;transform-origin:left 0;transform:scaleX(1.0453);">Druckanstieg [bar/s]</div>
<div style="position:absolute;left:1602.80px;top:1035.71px;font-size:24.6px;line-height:24.6px;height:24.6px;white-space:nowrap;color:#2a2a2a;transform-origin:left 0;transform:scaleX(1.0447);">Wegdifferent max [%]</div>
<div style="position:absolute;left:1363.5px;top:1066.5px;width:186px;height:51px;box-sizing:border-box;border:2px solid #b9babe;background:#ffffff;"></div>
<div style="position:absolute;left:1508px;top:1066.5px;width:2px;height:51px;background:#b9babe;"></div>
<div style="position:absolute;left:1510px;top:1068.5px;width:37.5px;height:47px;background:#f0f0f0;"></div>
<div style="position:absolute;left:1509px;top:1091.0px;width:40.5px;height:2px;background:#b9babe;"></div>
<div style="position:absolute;left:1523.8px;top:1078.0px;width:11.4px;height:3.4px;border-radius:0.8px;background:#9a9a9a;"></div>
<div style="position:absolute;left:1527.8px;top:1074.0px;width:3.4px;height:11.4px;border-radius:0.8px;background:#9a9a9a;"></div>
<div style="position:absolute;left:1523.8px;top:1103.0px;width:11.4px;height:3.6px;border-radius:0.8px;background:#9a9a9a;"></div>
<div style="position:absolute;left:940.55px;width:1000px;text-align:center;top:1080.06px;font-size:24.6px;line-height:24.6px;height:24.6px;white-space:nowrap;color:#2a2a2a;transform-origin:center 0;transform:scaleX(0.975);">20</div>
<div style="position:absolute;left:1600.5px;top:1066.5px;width:187px;height:51px;box-sizing:border-box;border:2px solid #b9babe;background:#ffffff;"></div>
<div style="position:absolute;left:1744.5px;top:1066.5px;width:2px;height:51px;background:#b9babe;"></div>
<div style="position:absolute;left:1746.5px;top:1068.5px;width:39.0px;height:47px;background:#f0f0f0;"></div>
<div style="position:absolute;left:1745.5px;top:1091.0px;width:42.0px;height:2px;background:#b9babe;"></div>
<div style="position:absolute;left:1761.1px;top:1078.0px;width:11.4px;height:3.4px;border-radius:0.8px;background:#9a9a9a;"></div>
<div style="position:absolute;left:1765.1px;top:1074.0px;width:3.4px;height:11.4px;border-radius:0.8px;background:#9a9a9a;"></div>
<div style="position:absolute;left:1761.1px;top:1103.0px;width:11.4px;height:3.6px;border-radius:0.8px;background:#9a9a9a;"></div>
<div style="position:absolute;left:1177.3px;width:1000px;text-align:center;top:1080.06px;font-size:24.6px;line-height:24.6px;height:24.6px;white-space:nowrap;color:#2a2a2a;transform-origin:center 0;transform:scaleX(0.975);">2</div>
<div style="position:absolute;left:22.99px;top:1176.06px;font-size:24.6px;line-height:24.6px;height:24.6px;white-space:nowrap;color:#2a2a2a;transform-origin:left 0;transform:scaleX(1.0055);">P-Regler A02</div>
<div style="position:absolute;left:23.5px;top:1207px;width:186px;height:51px;box-sizing:border-box;border:2px solid #b9babe;background:#ffffff;"></div>
<div style="position:absolute;left:167px;top:1207px;width:2px;height:51px;background:#b9babe;"></div>
<div style="position:absolute;left:169px;top:1209px;width:38.5px;height:47px;background:#f0f0f0;"></div>
<div style="position:absolute;left:168px;top:1231.5px;width:41.5px;height:2px;background:#b9babe;"></div>
<div style="position:absolute;left:183.4px;top:1218.5px;width:11.4px;height:3.4px;border-radius:0.8px;background:#9a9a9a;"></div>
<div style="position:absolute;left:187.4px;top:1214.5px;width:3.4px;height:11.4px;border-radius:0.8px;background:#9a9a9a;"></div>
<div style="position:absolute;left:183.4px;top:1243.5px;width:11.4px;height:3.6px;border-radius:0.8px;background:#9a9a9a;"></div>
<div style="position:absolute;left:-399.95px;width:1000px;text-align:center;top:1220.56px;font-size:24.6px;line-height:24.6px;height:24.6px;white-space:nowrap;color:#2a2a2a;transform-origin:center 0;transform:scaleX(0.975);">12,000</div>
<div style="position:absolute;left:238.97px;top:1176.06px;font-size:24.6px;line-height:24.6px;height:24.6px;white-space:nowrap;color:#2a2a2a;transform-origin:left 0;transform:scaleX(1.0175);">I-Regler A02</div>
<div style="position:absolute;left:239px;top:1207px;width:186px;height:51px;box-sizing:border-box;border:2px solid #b9babe;background:#ffffff;"></div>
<div style="position:absolute;left:383px;top:1207px;width:2px;height:51px;background:#b9babe;"></div>
<div style="position:absolute;left:385px;top:1209px;width:38px;height:47px;background:#f0f0f0;"></div>
<div style="position:absolute;left:384px;top:1231.5px;width:41px;height:2px;background:#b9babe;"></div>
<div style="position:absolute;left:399.1px;top:1218.5px;width:11.4px;height:3.4px;border-radius:0.8px;background:#9a9a9a;"></div>
<div style="position:absolute;left:403.1px;top:1214.5px;width:3.4px;height:11.4px;border-radius:0.8px;background:#9a9a9a;"></div>
<div style="position:absolute;left:399.1px;top:1243.5px;width:11.4px;height:3.6px;border-radius:0.8px;background:#9a9a9a;"></div>
<div style="position:absolute;left:-184.2px;width:1000px;text-align:center;top:1220.56px;font-size:24.6px;line-height:24.6px;height:24.6px;white-space:nowrap;color:#2a2a2a;transform-origin:center 0;transform:scaleX(0.975);">26,100</div>
<div style="position:absolute;left:457.00px;top:1176.06px;font-size:24.6px;line-height:24.6px;height:24.6px;white-space:nowrap;color:#2a2a2a;transform-origin:left 0;transform:scaleX(1.0235);">A02 Startposition</div>
<div style="position:absolute;left:455px;top:1207px;width:186px;height:51px;box-sizing:border-box;border:2px solid #b9babe;background:#ffffff;"></div>
<div style="position:absolute;left:599px;top:1207px;width:2px;height:51px;background:#b9babe;"></div>
<div style="position:absolute;left:601px;top:1209px;width:38px;height:47px;background:#f0f0f0;"></div>
<div style="position:absolute;left:600px;top:1231.5px;width:41px;height:2px;background:#b9babe;"></div>
<div style="position:absolute;left:615.1px;top:1218.5px;width:11.4px;height:3.4px;border-radius:0.8px;background:#9a9a9a;"></div>
<div style="position:absolute;left:619.1px;top:1214.5px;width:3.4px;height:11.4px;border-radius:0.8px;background:#9a9a9a;"></div>
<div style="position:absolute;left:615.1px;top:1243.5px;width:11.4px;height:3.6px;border-radius:0.8px;background:#9a9a9a;"></div>
<div style="position:absolute;left:31.799999999999955px;width:1000px;text-align:center;top:1220.56px;font-size:24.6px;line-height:24.6px;height:24.6px;white-space:nowrap;color:#2a2a2a;transform-origin:center 0;transform:scaleX(0.975);">20</div>
<div style="position:absolute;left:672.50px;top:1176.06px;font-size:24.6px;line-height:24.6px;height:24.6px;white-space:nowrap;color:#2a2a2a;transform-origin:left 0;transform:scaleX(0.9712);">Anzahl Zyklen A02</div>
<div style="position:absolute;left:670.5px;top:1207px;width:186px;height:51px;box-sizing:border-box;border:2px solid #b9babe;background:#ffffff;"></div>
<div style="position:absolute;left:814px;top:1207px;width:2px;height:51px;background:#b9babe;"></div>
<div style="position:absolute;left:816px;top:1209px;width:38.5px;height:47px;background:#f0f0f0;"></div>
<div style="position:absolute;left:815px;top:1231.5px;width:41.5px;height:2px;background:#b9babe;"></div>
<div style="position:absolute;left:830.3px;top:1218.5px;width:11.4px;height:3.4px;border-radius:0.8px;background:#9a9a9a;"></div>
<div style="position:absolute;left:834.3px;top:1214.5px;width:3.4px;height:11.4px;border-radius:0.8px;background:#9a9a9a;"></div>
<div style="position:absolute;left:830.3px;top:1243.5px;width:11.4px;height:3.6px;border-radius:0.8px;background:#9a9a9a;"></div>
<div style="position:absolute;left:247.04999999999995px;width:1000px;text-align:center;top:1220.56px;font-size:24.6px;line-height:24.6px;height:24.6px;white-space:nowrap;color:#2a2a2a;transform-origin:center 0;transform:scaleX(0.975);">100000</div>
<div style="position:absolute;left:897.96px;top:1181.96px;font-size:24.6px;line-height:24.6px;height:24.6px;white-space:nowrap;color:#2a2a2a;transform-origin:left 0;transform:scaleX(1.0196);">Druckbereich</div>
<div style="position:absolute;left:899.5px;top:1214.5px;width:95.5px;height:43.5px;box-sizing:border-box;border-radius:21.75px;background:#efefef;border:1.5px solid #cfcfcf;"></div>
<div style="position:absolute;left:899.5px;top:1214.5px;width:43.5px;height:43.5px;box-sizing:border-box;border-radius:50%;background:#fff;border:1.5px solid #b4b4b4;"></div>
<div style="position:absolute;left:1012.00px;top:1224.96px;font-size:24.6px;line-height:24.6px;height:24.6px;white-space:nowrap;color:#2a2a2a;transform-origin:left 0;transform:scaleX(1.0274);">500 bar</div>
<div style="position:absolute;left:1113.95px;top:1176.46px;font-size:24.6px;line-height:24.6px;height:24.6px;white-space:nowrap;color:#2a2a2a;transform-origin:left 0;transform:scaleX(1.0235);">Max Wegdifferenz Leckage [%] A02</div>
<div style="position:absolute;left:1113.5px;top:1207.5px;width:186px;height:51px;box-sizing:border-box;border:2px solid #b9babe;background:#ffffff;"></div>
<div style="position:absolute;left:1257px;top:1207.5px;width:2px;height:51px;background:#b9babe;"></div>
<div style="position:absolute;left:1259px;top:1209.5px;width:38.5px;height:47px;background:#f0f0f0;"></div>
<div style="position:absolute;left:1258px;top:1232.0px;width:41.5px;height:2px;background:#b9babe;"></div>
<div style="position:absolute;left:1273.3px;top:1219.0px;width:11.4px;height:3.4px;border-radius:0.8px;background:#9a9a9a;"></div>
<div style="position:absolute;left:1277.3px;top:1215.0px;width:3.4px;height:11.4px;border-radius:0.8px;background:#9a9a9a;"></div>
<div style="position:absolute;left:1273.3px;top:1244.0px;width:11.4px;height:3.6px;border-radius:0.8px;background:#9a9a9a;"></div>
<div style="position:absolute;left:690.05px;width:1000px;text-align:center;top:1221.06px;font-size:24.6px;line-height:24.6px;height:24.6px;white-space:nowrap;color:#2a2a2a;transform-origin:center 0;transform:scaleX(0.975);">20</div>
<div style="position:absolute;left:1525.91px;top:1143.21px;font-size:24.6px;line-height:24.6px;height:24.6px;white-space:nowrap;color:#2a2a2a;transform-origin:left 0;transform:scaleX(1.0436);">Max Druckdifferent</div>
<div style="position:absolute;left:1520px;top:1170px;width:347px;height:40px;overflow:hidden;">
<div style="position:absolute;left:5.96px;top:6.46px;font-size:24.6px;line-height:24.6px;white-space:nowrap;color:#2a2a2a;transform:scaleX(1.0183);transform-origin:left 0;">Bereichsüberwachung [bar] A02</div>
</div>
<div style="position:absolute;left:1525.5px;top:1207.5px;width:186px;height:51px;box-sizing:border-box;border:2px solid #b9babe;background:#ffffff;"></div>
<div style="position:absolute;left:1669.5px;top:1207.5px;width:2px;height:51px;background:#b9babe;"></div>
<div style="position:absolute;left:1671.5px;top:1209.5px;width:38.0px;height:47px;background:#f0f0f0;"></div>
<div style="position:absolute;left:1670.5px;top:1232.0px;width:41.0px;height:2px;background:#b9babe;"></div>
<div style="position:absolute;left:1685.6px;top:1219.0px;width:11.4px;height:3.4px;border-radius:0.8px;background:#9a9a9a;"></div>
<div style="position:absolute;left:1689.6px;top:1215.0px;width:3.4px;height:11.4px;border-radius:0.8px;background:#9a9a9a;"></div>
<div style="position:absolute;left:1685.6px;top:1244.0px;width:11.4px;height:3.6px;border-radius:0.8px;background:#9a9a9a;"></div>
<div style="position:absolute;left:1102.3px;width:1000px;text-align:center;top:1221.06px;font-size:24.6px;line-height:24.6px;height:24.6px;white-space:nowrap;color:#2a2a2a;transform-origin:center 0;transform:scaleX(0.975);">2</div>
<div style="position:absolute;left:0;top:1197px;width:1px;height:92px;background:#c6c8cc;"></div>
<svg style="position:absolute;left:0;top:0" width="30" height="290"><path d="M1 237 L1 268 L8.5 261.5 L13.5 271 Q15.5 273.5 18.5 271 L14.5 260.5 L23 259.5 Z" fill="#fff" stroke="#333" stroke-width="1.8" stroke-linejoin="round"/><rect x="0" y="237" width="2" height="31" fill="#3a3a48"/></svg>
</body></html>
